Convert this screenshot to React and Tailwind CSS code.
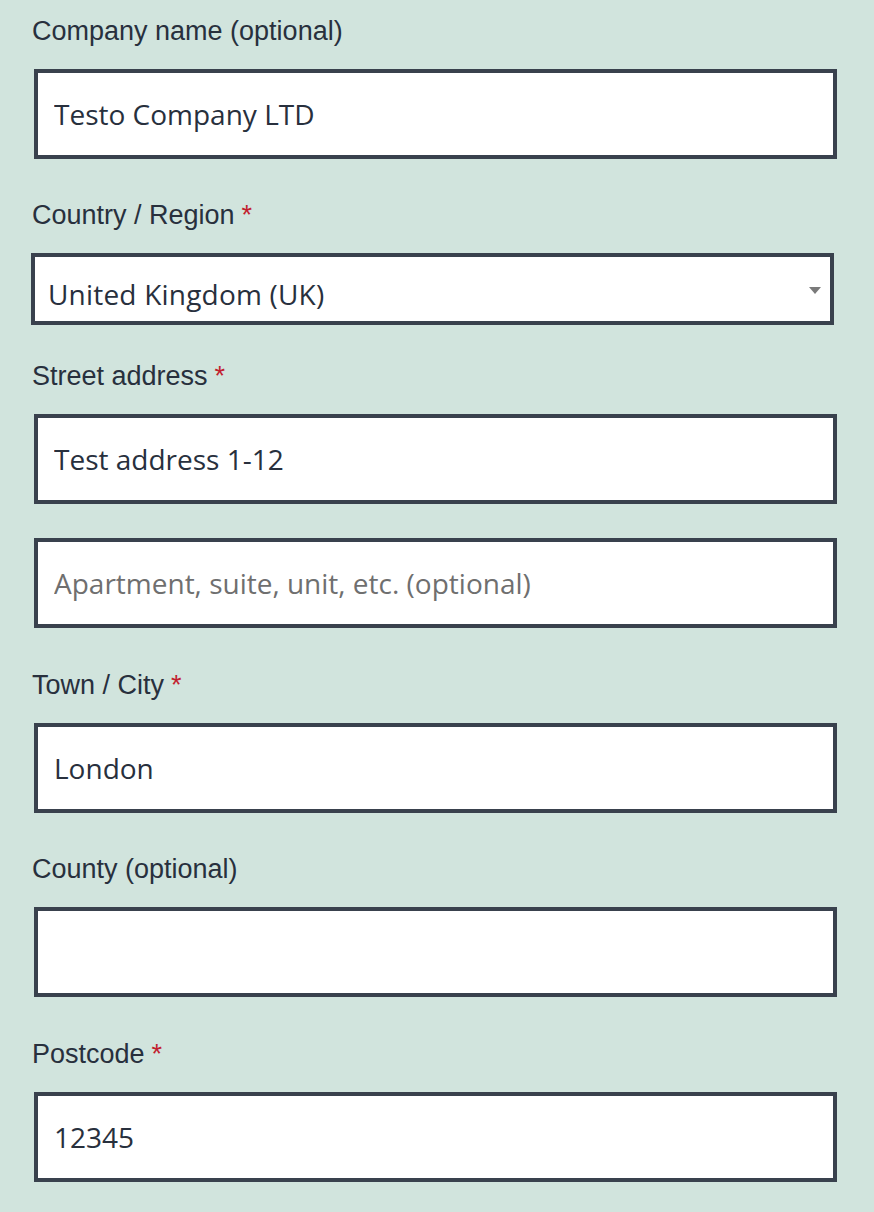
import React from 'react';

const labelCls = "block text-[27px] leading-[38px] text-[#28303d] mb-[19px] font-['Liberation_Sans',Arial,sans-serif]";
const inputCls = "block w-[803px] h-[90px] ml-[34px] border-[4px] border-[#39414d] bg-white pl-[16px] pr-4 text-[28px] text-[#28303d] placeholder:text-[#6f6f6f] outline-none font-['Open_Sans','Noto_Sans',sans-serif]";

const Req = () => <span className="text-[#c21e2f] ml-[7px]">*</span>;

const Field = ({ label, required, value, placeholder, mb }) => (
  <div className={mb}>
    <label className={labelCls + ' ml-[32px]'}>{label}{required && <Req />}</label>
    <input className={inputCls} defaultValue={value} placeholder={placeholder} />
  </div>
);

export default function App() {
  return (
    <div className="w-[874px] h-[1212px] bg-[#d1e4dd] pt-[12px] overflow-hidden">
      <Field label="Company name (optional)" value="Testo Company LTD" mb="mb-[37px]" />

      <div className="mb-[32px]">
        <label className={labelCls + ' ml-[32px]'}>Country / Region<Req /></label>
        <div className="relative ml-[31px] w-[803px] h-[72px] border-[4px] border-[#39414d] bg-white pl-[13px] pt-[16px] text-[28px] tracking-[0.2px] text-[#28303d] font-['Open_Sans','Noto_Sans',sans-serif]">
          United Kingdom (UK)
          <svg className="absolute right-[9px] top-[30px]" width="12" height="7" viewBox="0 0 12 7">
            <path d="M0 0h12L6 7z" fill="#7a7a7a" />
          </svg>
        </div>
      </div>

      <div className="mb-[38px]">
        <label className={labelCls + ' ml-[32px]'}>Street address<Req /></label>
        <input className={inputCls + ' mb-[34px]'} defaultValue="Test address 1-12" />
        <input className={inputCls} placeholder="Apartment, suite, unit, etc. (optional)" />
      </div>

      <Field label="Town / City" required value="London" mb="mb-[37px]" />
      <Field label="County (optional)" value="" mb="mb-[38px]" />
      <Field label="Postcode" required value="12345" />
    </div>
  );
}
